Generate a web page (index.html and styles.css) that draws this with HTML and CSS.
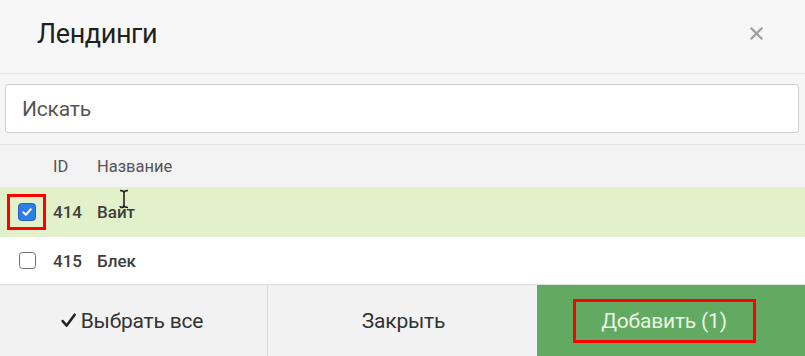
FILE: index.html
```html
<!DOCTYPE html>
<html lang="ru">
<head>
<meta charset="utf-8">
<link rel="stylesheet" href="styles.css">
</head>
<body>
<div class="modal">
  <div class="header">
    <h1 class="title">Лендинги</h1>
    <svg class="close" viewBox="0 0 14 14" width="13" height="13"><path d="M1.5 1.5 L12.5 12.5 M12.5 1.5 L1.5 12.5" stroke="#a0a0a0" stroke-width="2.4" stroke-linecap="round"/></svg>
  </div>
  <div class="search">
    <div class="input">Искать</div>
  </div>
  <div class="table">
    <div class="row head">
      <div class="c-check"></div>
      <div class="c-id">ID</div>
      <div class="c-name">Название</div>
    </div>
    <div class="row selected">
      <div class="c-check"><span class="mark"><span class="cb checked"><svg viewBox="0 0 12 12" width="12" height="12"><path d="M2.3 6.3 L4.9 8.8 L9.8 3.2" fill="none" stroke="#fff" stroke-width="2" stroke-linecap="round" stroke-linejoin="round"/></svg></span></span></div>
      <div class="c-id">414</div>
      <div class="c-name">Вайт<svg class="ibeam" viewBox="0 0 10 20" width="10" height="20"><path d="M1 1.5 Q5 1.5 5 4 Q5 1.5 9 1.5 M5 4 V16 M1 18.5 Q5 18.5 5 16 Q5 18.5 9 18.5" fill="none" stroke="#222" stroke-width="1.6"/></svg></div>
    </div>
    <div class="row">
      <div class="c-check"><span class="cb"></span></div>
      <div class="c-id">415</div>
      <div class="c-name">Блек</div>
    </div>
  </div>
  <div class="footer">
    <div class="btn"><svg class="tick" viewBox="0 0 16 16" width="17" height="17"><path d="M2.5 8.5 L6.3 12.8 L13.8 2.5" fill="none" stroke="#222" stroke-width="2.4" stroke-linecap="round" stroke-linejoin="round"/></svg>Выбрать все</div>
    <div class="btn">Закрыть</div>
    <div class="btn primary"><span class="mark wide">Добавить (1)</span></div>
  </div>
</div>
</body>
</html>
```
FILE: styles.css
```css
* { box-sizing: border-box; }
html, body { margin: 0; padding: 0; background: #fff; }
body { font-family: Roboto, "Noto Sans", "Liberation Sans", sans-serif; color: #333; }
.modal { width: 805px; height: 356px; display: flex; flex-direction: column; overflow: hidden; }
.header {
  height: 74px; background: #f7f7f7; border-bottom: 1px solid #e2e2e2;
  display: flex; align-items: center; justify-content: space-between;
  padding: 0 42px 6px 37px;
}
.title { margin: 0; font-weight: 400; font-size: 27px; color: #1f1f1f; letter-spacing: -0.4px; transform: scaleY(1.05); }
.close { display: block; }
.search { background: #f5f5f5; padding: 10px 6px 11px 5px; border-bottom: 1px solid #e4e4e4; }
.input {
  height: 49px; background: #fff; border: 1px solid #cfcfcf; border-radius: 3px;
  display: flex; align-items: center; padding-left: 16px; font-size: 21px; color: #555;
  letter-spacing: -0.2px;
}
.table { display: flex; flex-direction: column; }
.row { display: flex; align-items: center; height: 47px; font-size: 17px; color: #3e3e3e; font-weight: 500; }
.row.head { height: 42px; background: #f3f3f3; font-size: 16.5px; color: #555; font-weight: 400; }
.row.selected { height: 50px; background: #e3f1cb; }
.c-check { width: 53px; display: flex; align-items: center; padding-left: 19px; }
.row.selected .c-check { padding-left: 7px; }
.c-id { width: 44px; }
.c-name { position: relative; }
.mark { border: 3px solid #f00; display: inline-flex; align-items: center; justify-content: center; }
.c-check .mark { width: 39px; height: 36px; }
.cb {
  width: 17px; height: 17px; border: 1.5px solid #6f6f6f; border-radius: 3.5px; background: #fff;
  display: inline-flex; align-items: center; justify-content: center;
}
.cb.checked { width: 18px; height: 18px; background: #2d7de6; border-color: #1f62c4; }
.ibeam { position: absolute; left: 22px; top: -13px; }
.footer { flex: 1; display: flex; border-top: 1px solid #dcdcdc; }
.btn {
  flex: 0 0 auto; display: flex; align-items: center; justify-content: center;
  background: #f2f2f2; font-size: 21px; color: #333; letter-spacing: -0.2px;
}
.btn:nth-child(1) { width: 267px; padding-right: 4px; }
.btn:nth-child(2) { width: 270px; border-left: 1px solid #d8d8d8; padding-left: 2px; }
.btn.primary { width: 268px; background: #62a962; color: #e9f5e3; padding-right: 14px; }
.mark.wide { width: 183px; height: 44px; }
.tick { margin-right: 4px; }
```
